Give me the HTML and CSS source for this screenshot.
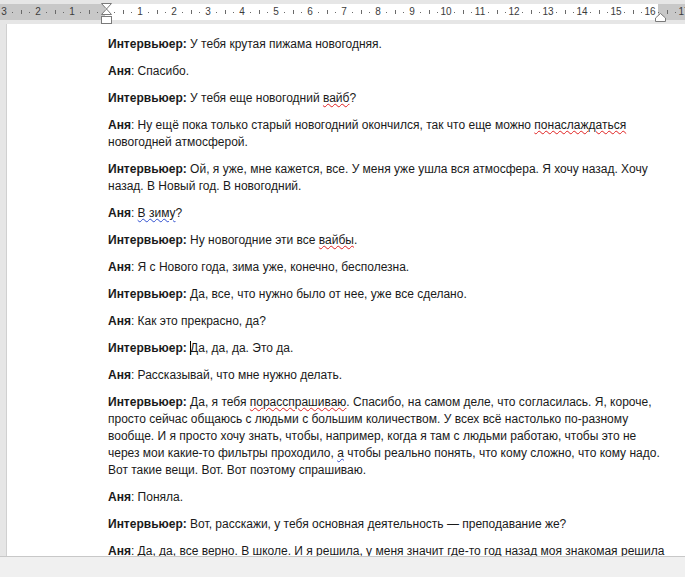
FILE: index.html
```html
<!DOCTYPE html>
<html lang="ru">
<head>
<meta charset="utf-8">
<link rel="stylesheet" href="styles.css">
</head>
<body>
<div class="app">
  <div class="ruler-bar">
    <div class="ruler">
      <div class="scale">
        <div class="cm"><i class="dot"></i><i class="tick"></i><i class="dot"></i><span class="num">3</span></div>
        <div class="cm"><i class="dot"></i><i class="tick"></i><i class="dot"></i><span class="num">2</span></div>
        <div class="cm"><i class="dot"></i><i class="tick"></i><i class="dot"></i><span class="num">1</span></div>
        <div class="cm"><i class="dot"></i><i class="tick"></i><i class="dot"></i><span class="num"></span></div>
        <div class="cm"><i class="dot"></i><i class="tick"></i><i class="dot"></i><span class="num">1</span></div>
        <div class="cm"><i class="dot"></i><i class="tick"></i><i class="dot"></i><span class="num">2</span></div>
        <div class="cm"><i class="dot"></i><i class="tick"></i><i class="dot"></i><span class="num">3</span></div>
        <div class="cm"><i class="dot"></i><i class="tick"></i><i class="dot"></i><span class="num">4</span></div>
        <div class="cm"><i class="dot"></i><i class="tick"></i><i class="dot"></i><span class="num">5</span></div>
        <div class="cm"><i class="dot"></i><i class="tick"></i><i class="dot"></i><span class="num">6</span></div>
        <div class="cm"><i class="dot"></i><i class="tick"></i><i class="dot"></i><span class="num">7</span></div>
        <div class="cm"><i class="dot"></i><i class="tick"></i><i class="dot"></i><span class="num">8</span></div>
        <div class="cm"><i class="dot"></i><i class="tick"></i><i class="dot"></i><span class="num">9</span></div>
        <div class="cm"><i class="dot"></i><i class="tick"></i><i class="dot"></i><span class="num">10</span></div>
        <div class="cm"><i class="dot"></i><i class="tick"></i><i class="dot"></i><span class="num">11</span></div>
        <div class="cm"><i class="dot"></i><i class="tick"></i><i class="dot"></i><span class="num">12</span></div>
        <div class="cm"><i class="dot"></i><i class="tick"></i><i class="dot"></i><span class="num">13</span></div>
        <div class="cm"><i class="dot"></i><i class="tick"></i><i class="dot"></i><span class="num">14</span></div>
        <div class="cm"><i class="dot"></i><i class="tick"></i><i class="dot"></i><span class="num">15</span></div>
        <div class="cm"><i class="dot"></i><i class="tick"></i><i class="dot"></i><span class="num">16</span></div>
        <div class="cm"><i class="dot"></i><i class="tick"></i><i class="dot"></i><span class="num">17</span></div>
      </div>
      <svg class="indent-left" width="13" height="22" viewBox="0 0 13 22">
        <path d="M1.5 0.5 H11.5 L6.5 6 Z" fill="#fff" stroke="#7a7a7a"/>
        <path d="M6.5 6 L11.5 11.5 H1.5 Z" fill="#fff" stroke="#7a7a7a"/>
        <rect x="1.5" y="13.5" width="10" height="7" fill="#fff" stroke="#7a7a7a"/>
      </svg>
      <svg class="indent-right" width="11" height="9" viewBox="0 0 11 9">
        <path d="M5.5 0.5 L10.5 5 V8.5 H0.5 V5 Z" fill="#fff" stroke="#7a7a7a"/>
      </svg>
    </div>
  </div>
  <div class="workspace">
    <div class="page">
      <p><b>Интервьюер:</b> У тебя крутая пижама новогодняя.</p>
      <p><b>Аня</b>: Спасибо.</p>
      <p><b>Интервьюер:</b> У тебя еще новогодний <span class="sp">вайб</span>?</p>
      <p><b>Аня</b>: Ну ещё пока только старый новогодний окончился, так что еще можно <span class="sp">понаслаждаться</span><br>новогодней атмосферой.</p>
      <p><b>Интервьюер:</b> Ой, я уже, мне кажется, все. У меня уже ушла вся атмосфера. Я хочу назад. Хочу<br>назад. В Новый год. В новогодний.</p>
      <p><b>Аня</b>: <span class="gr">В зиму</span>?</p>
      <p><b>Интервьюер:</b> Ну новогодние эти все <span class="sp">вайбы</span>.</p>
      <p><b>Аня</b>: Я с Нового года, зима уже, конечно, бесполезна.</p>
      <p><b>Интервьюер:</b> Да, все, что нужно было от нее, уже все сделано.</p>
      <p><b>Аня</b>: Как это прекрасно, да?</p>
      <p><b>Интервьюер:</b> <span class="caret"></span>Да, да, да. Это да.</p>
      <p><b>Аня</b>: Рассказывай, что мне нужно делать.</p>
      <p><b>Интервьюер:</b> Да, я тебя <span class="sp">порасспрашиваю</span>. Спасибо, на самом деле, что согласилась. Я, короче,<br>просто сейчас общаюсь с людьми с большим количеством. У всех всё настолько по-разному<br>вообще. И я просто хочу знать, чтобы, например, когда я там с людьми работаю, чтобы это не<br>через мои какие-то фильтры проходило, <span class="gr">а</span> чтобы реально понять, что кому сложно, что кому надо.<br>Вот такие вещи. Вот. Вот поэтому спрашиваю.</p>
      <p><b>Аня</b>: Поняла.</p>
      <p><b>Интервьюер:</b> Вот, расскажи, у тебя основная деятельность — преподавание же?</p>
      <p><b>Аня</b>: Да, да, все верно. В школе. И я решила, у меня значит где-то год назад моя знакомая решила</p>
    </div>
  </div>
  <div class="status"></div>
</div>
</body>
</html>
```
FILE: styles.css
```css
html, body {
  margin: 0;
  padding: 0;
}
body {
  width: 685px;
  height: 577px;
  overflow: hidden;
  background: #e6e6e6;
  font-family: "Liberation Sans", Arial, sans-serif;
}
.app {
  display: flex;
  flex-direction: column;
  height: 577px;
}
.ruler-bar {
  height: 24px;
  flex: none;
  background: #e6e6e6;
}
.ruler {
  position: relative;
  margin-top: 4px;
  height: 16px;
  background: linear-gradient(to right, #c8c8c8 0, #c8c8c8 105px, #fff 105px, #fff 658px, #c8c8c8 658px);
}
.scale {
  display: flex;
  height: 16px;
  margin-left: -25.75px;
  overflow: hidden;
}
.cm {
  flex: none;
  display: grid;
  grid-template-columns: repeat(4, 8.5px);
  justify-items: center;
  align-items: center;
  height: 16px;
}
.dot {
  width: 1px;
  height: 1px;
  background: #6a6a6a;
}
.tick {
  width: 1px;
  height: 4px;
  background: #6a6a6a;
}
.num {
  font-size: 10px;
  line-height: 16px;
  color: #3c3c3c;
  white-space: nowrap;
}
.indent-left {
  position: absolute;
  left: 100px;
  top: -1px;
}
.indent-right {
  position: absolute;
  left: 655px;
  top: 9px;
}
.workspace {
  flex: 1;
  display: flex;
  overflow: hidden;
  padding-left: 6px;
}
.page {
  flex: 1;
  background: #fff;
  border-left: 1px solid #d0d0d0;
  padding: 12px 0 0 101px;
  overflow: hidden;
  font-size: 12px;
  line-height: 17px;
  color: #1a1a1a;
}
.page p {
  margin: 0 0 10px;
  white-space: nowrap;
}
.page b {
  font-weight: bold;
}
.sp {
  text-decoration: underline wavy #e02020;
  text-decoration-thickness: 1px;
  text-underline-offset: 1px;
}
.gr {
  text-decoration: underline wavy #3050d0;
  text-decoration-thickness: 1px;
  text-underline-offset: 1px;
}
.caret {
  display: inline-block;
  width: 1px;
  height: 14px;
  background: #000;
  vertical-align: -3px;
  margin-right: -1px;
}
.status {
  height: 20px;
  flex: none;
  background: #f0f0f0;
  border-top: 1px solid #c8c8c8;
}
```
